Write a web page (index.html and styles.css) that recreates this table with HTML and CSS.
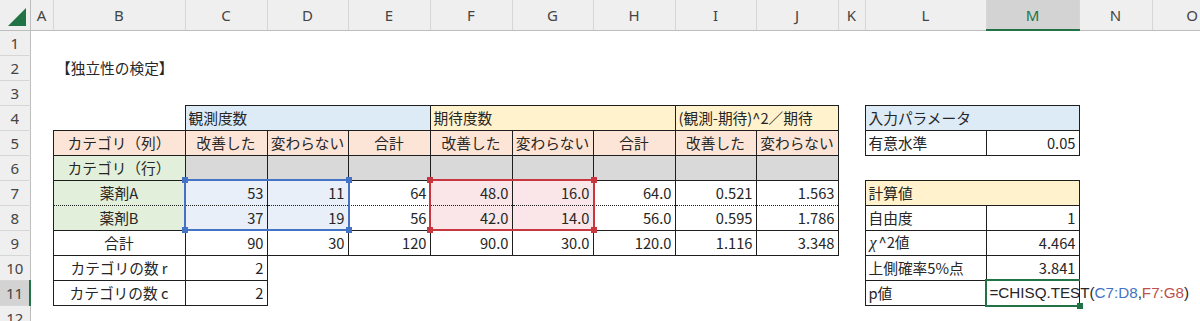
FILE: index.html
```html
<!DOCTYPE html>
<html lang="ja">
<head>
<meta charset="utf-8">
<title>独立性の検定</title>
<link rel="stylesheet" href="styles.css">
</head>
<body>
<div class="sheet">
<table class="grid">
<colgroup>
<col class="w30"><col class="w23"><col class="w132"><col class="w82"><col class="w81"><col class="w82"><col class="w82"><col class="w81"><col class="w82"><col class="w81"><col class="w82"><col class="w27"><col class="w121"><col class="w93"><col class="w73"><col class="w80">
</colgroup>
<tr class="hdr">
<th class="corner"><svg class="tri" width="30" height="29" viewBox="0 0 30 29"><polygon points="8,26 26,26 26,8" fill="#217346"/></svg></th>
<th>A</th><th>B</th><th>C</th><th>D</th><th>E</th><th>F</th><th>G</th><th>H</th><th>I</th><th>J</th><th>K</th><th>L</th><th class="hsel">M</th><th>N</th><th>O</th>
</tr>
<tr><th class="rh">1</th><td></td><td></td><td></td><td></td><td></td><td></td><td></td><td></td><td></td><td></td><td></td><td></td><td></td><td></td><td></td></tr>
<tr><th class="rh">2</th><td></td><td class="lft">【独立性の検定】</td><td></td><td></td><td></td><td></td><td></td><td></td><td></td><td></td><td></td><td></td><td></td><td></td><td></td></tr>
<tr><th class="rh">3</th><td></td><td></td><td></td><td></td><td></td><td></td><td></td><td></td><td></td><td></td><td></td><td></td><td></td><td></td><td></td></tr>
<tr><th class="rh">4</th><td></td><td></td>
<td colspan="3" class="b blue ind">観測度数</td>
<td colspan="3" class="b yel ind">期待度数</td>
<td colspan="2" class="b yel lft tight">(観測-期待)^2／期待</td>
<td></td>
<td colspan="2" class="b blue lft">入力パラメータ</td>
<td></td><td></td></tr>
<tr><th class="rh">5</th><td></td>
<td class="b pink ctr">カテゴリ（列）</td>
<td class="b pink ctr">改善した</td><td class="b pink ctr">変わらない</td><td class="b pink ctr">合計</td>
<td class="b pink ctr">改善した</td><td class="b pink ctr">変わらない</td><td class="b pink ctr">合計</td>
<td class="b pink ctr">改善した</td><td class="b pink ctr">変わらない</td>
<td></td>
<td class="b lft">有意水準</td><td class="b mnum">0.05</td>
<td></td><td></td></tr>
<tr><th class="rh">6</th><td></td>
<td class="b grn ctr">カテゴリ（行）</td>
<td class="b gry"></td><td class="b gry"></td><td class="b gry"></td><td class="b gry"></td><td class="b gry"></td><td class="b gry"></td><td class="b gry"></td><td class="b gry"></td>
<td></td><td></td><td></td><td></td><td></td></tr>
<tr><th class="rh">7</th><td></td>
<td class="b dotb grn ctr">薬剤A</td>
<td class="b dotb selb num">53</td><td class="b dotb selb num">11</td><td class="b dotb num">64</td>
<td class="b dotb selr num">48.0</td><td class="b dotb selr num">16.0</td><td class="b dotb num">64.0</td>
<td class="b dotb num">0.521</td><td class="b dotb num">1.563</td>
<td></td>
<td colspan="2" class="b yel lft">計算値</td>
<td></td><td></td></tr>
<tr><th class="rh">8</th><td></td>
<td class="b dott grn ctr">薬剤B</td>
<td class="b dott selb num">37</td><td class="b dott selb num">19</td><td class="b dott num">56</td>
<td class="b dott selr num">42.0</td><td class="b dott selr num">14.0</td><td class="b dott num">56.0</td>
<td class="b dott num">0.595</td><td class="b dott num">1.786</td>
<td></td>
<td class="b lft">自由度</td><td class="b mnum">1</td>
<td></td><td></td></tr>
<tr><th class="rh">9</th><td></td>
<td class="b ctr">合計</td>
<td class="b num">90</td><td class="b num">30</td><td class="b num">120</td>
<td class="b num">90.0</td><td class="b num">30.0</td><td class="b num">120.0</td>
<td class="b num">1.116</td><td class="b num">3.348</td>
<td></td>
<td class="b lft"><span class="chi">χ</span>^2値</td><td class="b mnum">4.464</td>
<td></td><td></td></tr>
<tr><th class="rh">10</th><td></td>
<td class="b ctr">カテゴリの数 r</td><td class="b num">2</td>
<td></td><td></td><td></td><td></td><td></td><td></td><td></td><td></td>
<td class="b lft">上側確率5%点</td><td class="b mnum">3.841</td>
<td></td><td></td></tr>
<tr><th class="rh rsel">11</th><td></td>
<td class="b ctr">カテゴリの数 c</td><td class="b num">2</td>
<td></td><td></td><td></td><td></td><td></td><td></td><td></td><td></td>
<td class="b lft">p値</td><td class="b lft formula">=CHISQ.TEST(<span class="ref-b">C7:D8</span>,<span class="ref-r">F7:G8</span>)</td>
<td></td><td></td></tr>
<tr><th class="rh">12</th><td></td><td></td><td></td><td></td><td></td><td></td><td></td><td></td><td></td><td></td><td></td><td></td><td></td><td></td><td></td></tr>
</table>

<div class="range range-b"><i class="h tl"></i><i class="h tr"></i><i class="h bl"></i><i class="h br"></i></div>
<div class="range range-r"><i class="h tl"></i><i class="h tr"></i><i class="h bl"></i><i class="h br"></i></div>
<div class="active"><i class="h br"></i></div>
</div>
</body>
</html>
```

FILE: styles.css
```css
* { box-sizing: border-box; }
html, body { margin: 0; padding: 0; background: #fff; overflow: hidden; }
body {
  font-family: "Noto Sans CJK JP", "Noto Sans", sans-serif;
  font-size: 14.7px;
  color: #262626;
}
.sheet { position: relative; width: 1232px; }

.grid { border-collapse: collapse; table-layout: fixed; width: 1232px; }
.w30 { width: 30px; } .w23 { width: 23px; } .w132 { width: 132px; }
.w82 { width: 82px; } .w81 { width: 81px; } .w27 { width: 27px; }
.w121 { width: 121px; } .w93 { width: 93px; } .w73 { width: 73px; } .w80 { width: 80px; }

.grid tr { height: 25px; }
.grid td, .grid th {
  padding: 0 3px;
  height: 25px;
  white-space: nowrap;
  vertical-align: middle;
  font-weight: normal;
  line-height: 20px;
  overflow: visible;
}

.hdr th {
  height: 30px;
  background: #efefef;
  color: #444;
  font-family: "Noto Sans", "Liberation Sans", sans-serif;
  font-size: 15px;
  text-align: center;
  border-right: 1px solid #d6d6d6;
  border-bottom: 1px solid #bdbdbd;
}
.hdr th.corner { padding: 0; border-right: 1px solid #bdbdbd; }
.tri { display: block; }
.hdr th.hsel { background: #d3d3d3; color: #217346; border-bottom: 2px solid #217346; }

th.rh {
  background: #efefef;
  color: #444;
  font-family: "Noto Sans", "Liberation Sans", sans-serif;
  font-size: 15px;
  text-align: center;
  padding: 0;
  border-right: 1px solid #bdbdbd;
  border-bottom: 1px solid #d6d6d6;
}
th.rsel { background: #d3d3d3; border-right: 2px solid #217346; }

.b { border: 1px solid #1e1e1e; }
.dotb { border-bottom: 1px dotted #1e1e1e; }
.dott { border-top: 1px dotted #1e1e1e; }

.lft { text-align: left; }
.ctr { text-align: center; }
.num { text-align: right; padding-right: 4px; }
.mnum { text-align: right; padding-right: 8px; }
.ind { text-align: left; padding-left: 11px; }
.tight { padding-left: 2px; }

.blue { background: #ddebf7; }
.yel { background: #fff2cc; }
.pink { background: #fce4d6; }
.grn { background: #e2efda; }
.gry { background: #d9d9d9; }
.selb { background: #e9eff9; }
.selr { background: #fae6e8; }

.chi { font-style: italic; font-family: "Liberation Serif", serif; font-size: 16px; padding: 0 2px 0 1px; }

.formula { font-family: "Liberation Sans", Arial, sans-serif; font-size: 15.2px; color: #262626; padding-left: 2px; }
.ref-b { color: #4472c4; }
.ref-r { color: #c0504d; }

.range { position: absolute; border: 2px solid; pointer-events: none; }
.range-b { left: 184px; top: 179px; width: 166px; height: 52px; border-color: #4472c4; }
.range-r { left: 429px; top: 179px; width: 166px; height: 52px; border-color: #c8373f; }
.range-b .h { background: #4472c4; }
.range-r .h { background: #c8373f; }
.h { position: absolute; width: 6px; height: 6px; display: block; }
.tl { left: -4px; top: -4px; }
.tr { right: -4px; top: -4px; }
.bl { left: -4px; bottom: -4px; }
.br { right: -4px; bottom: -4px; }

.active {
  position: absolute;
  left: 985px; top: 279px; width: 95px; height: 28px;
  border: 2px solid #217346;
  border-right: none;
  pointer-events: none;
}
.active .h { background: #217346; right: -3px; bottom: -4px; }
```
